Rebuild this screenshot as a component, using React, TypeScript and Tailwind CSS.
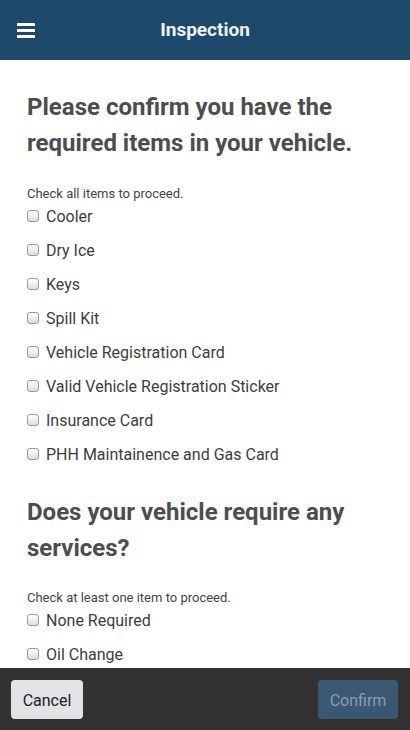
import React from 'react';

const requiredItems = [
  'Cooler',
  'Dry Ice',
  'Keys',
  'Spill Kit',
  'Vehicle Registration Card',
  'Valid Vehicle Registration Sticker',
  'Insurance Card',
  'PHH Maintainence and Gas Card',
];

const serviceItems = ['None Required', 'Oil Change'];

const CheckRow: React.FC<{ label: string }> = ({ label }) => (
  <label className="flex items-center h-[30px] gap-[7px] text-[16px] text-[#3d3d3d]">
    <span className="w-[12px] h-[12px] rounded-[3px] border border-[#9a9a9a] bg-gradient-to-b from-white to-[#dcdcdc] shrink-0 -mt-[2px]" />
    <span>{label}</span>
  </label>
);

export default function App() {
  return (
    <div className="flex flex-col h-[730px] w-[410px] bg-white overflow-hidden font-['Roboto',sans-serif]">
      {/* Header */}
      <header className="h-[60px] shrink-0 bg-[#1d4a6b] flex items-center relative">
        <button className="absolute left-[17px] top-[23px] flex flex-col gap-[3px]">
          <span className="block w-[18px] h-[3px] bg-white" />
          <span className="block w-[18px] h-[3px] bg-white" />
          <span className="block w-[18px] h-[3px] bg-white" />
        </button>
        <h1 className="flex-1 text-center text-[19px] font-bold text-[#eef1f4]">Inspection</h1>
      </header>

      {/* Content */}
      <main className="flex-1 overflow-hidden px-[27px] pt-[29px]">
        <h2 className="text-[24px] leading-[36px] font-bold text-[#4d4d4d]">
          Please confirm you have the required items in your vehicle.
        </h2>
        <p className="mt-[25px] text-[13px] leading-[16px] text-[#444]">Check all items to proceed.</p>
        <div className="flex flex-col gap-[4px]">
          {requiredItems.map((item) => (
            <CheckRow key={item} label={item} />
          ))}
        </div>

        <h2 className="mt-[24px] text-[24px] leading-[36px] font-bold text-[#4d4d4d]">
          Does your vehicle require any services?
        </h2>
        <p className="mt-[24px] text-[13px] leading-[16px] text-[#444]">Check at least one item to proceed.</p>
        <div className="flex flex-col gap-[4px]">
          {serviceItems.map((item) => (
            <CheckRow key={item} label={item} />
          ))}
        </div>
      </main>

      {/* Footer */}
      <footer className="h-[62px] shrink-0 bg-[#323232] flex items-center justify-between px-[11px]">
        <button className="h-[39px] w-[72px] pt-[4px] rounded-[4px] bg-[#e2e3e5] text-[16px] text-[#222]">Cancel</button>
        <button className="h-[39px] w-[80px] pt-[4px] rounded-[4px] bg-[#3b5872] text-[16px] text-[#8d9cab] mr-[1px]">Confirm</button>
      </footer>
    </div>
  );
}
